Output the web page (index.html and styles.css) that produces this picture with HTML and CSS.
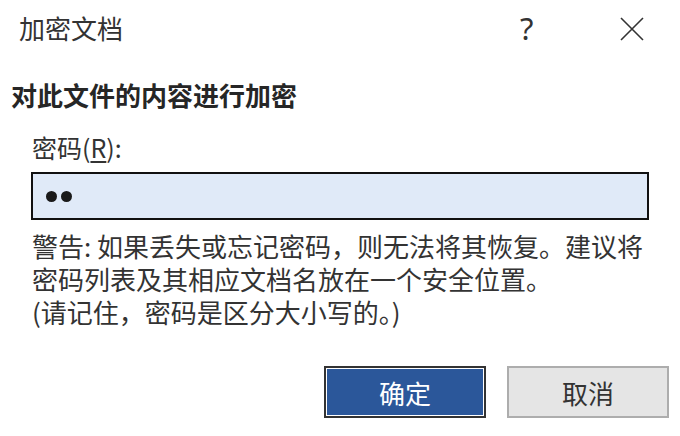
FILE: index.html
```html
<!DOCTYPE html>
<html lang="zh-CN">
<head>
    <meta charset="UTF-8">
    <title>加密文档</title>
    <link rel="stylesheet" href="styles.css">
</head>
<body>
    <div class="dialog">
        <div class="titlebar">
            <span class="title">加密文档</span>
            <span class="help">?</span>
            <span class="close">
                <svg width="24" height="24" viewBox="0 0 24 24">
                    <path d="M1 1 L23 23 M23 1 L1 23" stroke="#333" stroke-width="1.6" fill="none"/>
                </svg>
            </span>
        </div>

        <h1 class="heading">对此文件的内容进行加密</h1>

        <label class="label">密码(<u>R</u>):</label>
        <div class="password">
            <span class="dot"></span><span class="dot"></span>
        </div>

        <p class="warning">警告: 如果丢失或忘记密码，则无法将其恢复。建议将<br>密码列表及其相应文档名放在一个安全位置。<br>(请记住，密码是区分大小写的。)</p>

        <div class="buttons">
            <button class="btn btn-ok">确定</button>
            <button class="btn btn-cancel">取消</button>
        </div>
    </div>
</body>
</html>
```

FILE: styles.css
```css
body {
    margin: 0;
    background: #fff;
    color: #2b2b2b;
    font-family: "Noto Sans CJK SC", "Noto Sans", sans-serif;
}

.dialog {
    width: 680px;
    height: 436px;
    display: flex;
    flex-direction: column;
}

.titlebar {
    height: 58px;
    display: flex;
    align-items: center;
    padding-left: 19px;
}

.title {
    font-size: 26px;
    line-height: 58px;
    color: #333;
    flex: 1;
    margin-top: -2px;
}

.help {
    font-family: "Noto Sans", sans-serif;
    font-size: 31px;
    color: #333;
    width: 20px;
    margin-right: 80px;
    margin-top: -2px;
}

.close {
    display: flex;
    margin-right: 36px;
    margin-top: -1px;
}

.heading {
    margin: 20px 0 0 11px;
    font-size: 26px;
    line-height: 34px;
    font-weight: bold;
    color: #262626;
}

.label {
    margin: 18px 0 0 32px;
    font-size: 25px;
    line-height: 34px;
    color: #333;
}

.label u {
    text-underline-offset: 3px;
}

.password {
    margin: 8px 0 0 31px;
    width: 601px;
    height: 44px;
    border: 2px solid #111;
    background: #e0eaf8;
    display: flex;
    align-items: center;
    gap: 4px;
    padding-left: 13px;
    box-sizing: content-box;
}

.dot {
    width: 11px;
    height: 11px;
    border-radius: 50%;
    background: #1a1a1a;
}

.warning {
    margin: 9px 0 0 32px;
    font-size: 26px;
    line-height: 33px;
    color: #333;
}

.buttons {
    display: flex;
    justify-content: flex-end;
    gap: 21px;
    margin: 38px 11px 0 0;
}

.btn {
    width: 162px;
    height: 52px;
    font-family: inherit;
    font-size: 26px;
    box-sizing: border-box;
    padding: 0;
}

.btn-ok {
    background: #2b579a;
    color: #fff;
    border: 2px solid #333;
    box-shadow: inset 0 0 0 1px #fff;
}

.btn-cancel {
    background: #e5e5e5;
    color: #333;
    border: 2px solid #adadad;
}
```
